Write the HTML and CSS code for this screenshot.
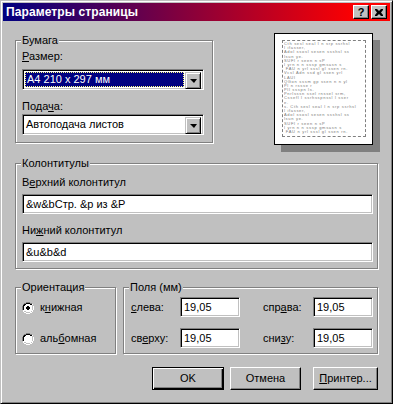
FILE: index.html
```html
<!DOCTYPE html>
<html>
<head>
<meta charset="utf-8">
<link rel="stylesheet" href="styles.css">
</head>
<body>
<div class="window">
  <div class="titlebar">
    <span class="title">Параметры страницы</span>
    <div class="tbtns">
      <span class="tbtn help">?</span>
      <span class="tbtn close"><svg width="8" height="7" viewBox="0 0 8 7"><path d="M0 0h2l2 2 2-2h2v1L6 3.5 8 6v1H6L4 5 2 7H0V6l2-2.5L0 1z" fill="#000"/></svg></span>
    </div>
  </div>
  <div class="content">
    <div class="row1">
      <div class="group g-paper">
        <span class="legend">Бумага</span>
        <div class="lbl"><u>Р</u>азмер:</div>
        <div class="combo c1">
          <div class="combo-val sel"><span>A4 210 x 297 мм</span></div>
          <div class="combo-btn"><span class="arrow"></span></div>
        </div>
        <div class="lbl l2">Пода<u>ч</u>а:</div>
        <div class="combo c2">
          <div class="combo-val"><span>Автоподача листов</span></div>
          <div class="combo-btn"><span class="arrow"></span></div>
        </div>
      </div>
      <div class="preview">
        <div class="page">
          <div class="margins">
            <div class="greek">Cth sesl seal l n srp ssrhsl</div>
            <div class="greek">l ifasser,</div>
            <div class="greek">Adol ssosl sesen ssshsl ss</div>
            <div class="greek">lsun ye.</div>
            <div class="greek">SUFl r seen n sP</div>
            <div class="greek">l yrn n n sssp gmsasn s</div>
            <div class="greek">&nbsp;FAU n yrl sssl gl ssen rn.</div>
            <div class="greek">Vcsl Adn ssd gl ssen yrl</div>
            <div class="greek">LAUl</div>
            <div class="greek">QGon sssm gp ssen n n yl</div>
            <div class="greek">Pl n rssse r</div>
            <div class="greek">Pll ssspn ls.</div>
            <div class="greek">Pnrlsssn ssel rnssel srm,</div>
            <div class="greek">Cssefl l ssrhsspnssl l sser</div>
            <div class="greek">e.</div>
            <div class="greek">s. Cth sesl seal l n srp ssrhsl</div>
            <div class="greek">l ifasser,</div>
            <div class="greek">Adol ssosl sesen ssshsl ss</div>
            <div class="greek">lsun ye.</div>
            <div class="greek">SUFl r seen n sP</div>
            <div class="greek">l yrn n n sssp gmsasn s</div>
            <div class="greek">&nbsp;FAU n yrl sssl gl ssen rn.</div>
          </div>
        </div>
      </div>
    </div>

    <div class="group g-hf">
      <span class="legend">Колонтитулы</span>
      <div class="lbl">В<u>е</u>рхний колонтитул</div>
      <div class="field wide f1">&amp;w&amp;bСтр. &amp;p из &amp;P</div>
      <div class="lbl l2">Ни<u>ж</u>ний колонтитул</div>
      <div class="field wide f2">&amp;u&amp;b&amp;d</div>
    </div>

    <div class="row3">
      <div class="group g-orient">
        <span class="legend">Ориентация</span>
        <div class="radio-row">
          <svg class="radio" width="12" height="12" viewBox="0 0 12 12">
            <path d="M4 0h4v1h2v1h1v2h1v4h-1v2h-1v1H8v1H4v-1H2v-1H1V8H0V4h1V2h1V1h2z" fill="#fff"/>
            <path d="M4 0h4v1h2v1h-2v-1H4v1H2v2H1v4H0V4h1V2h1V1h2z" fill="#808080"/>
            <path d="M4 1h4v1H4zM2 2h2v1H2zM8 2h2v1H8zM1 3h1v1H1zM2 3h1v1H2zM1 4h1v4H1z" fill="#000"/>
            <path d="M2 2h1v1H2zM9 2h1v1H9z" fill="#000"/>
            <path d="M10 3h1v1h-1zM10 4h1v4h-1zM10 8h1v1h-1zM9 9h1v1H9zM4 10h4v1H4zM2 9h2v1H2z" fill="#c0c0c0"/>
            <path d="M11 4h1v4h-1zM10 8h1v2h-1zM8 10h2v1H8zM4 11h4v1H4zM2 10h2v1H2z" fill="#fff"/>
            <path d="M5 4h2v1h1v2H7v1H5V7H4V5h1z" fill="#000"/>
          </svg>
          <span>к<u>н</u>ижная</span>
        </div>
        <div class="radio-row r2">
          <svg class="radio" width="12" height="12" viewBox="0 0 12 12">
            <path d="M4 0h4v1h2v1h1v2h1v4h-1v2h-1v1H8v1H4v-1H2v-1H1V8H0V4h1V2h1V1h2z" fill="#fff"/>
            <path d="M4 0h4v1h2v1h-2v-1H4v1H2v2H1v4H0V4h1V2h1V1h2z" fill="#808080"/>
            <path d="M4 1h4v1H4zM2 2h2v1H2zM8 2h2v1H8zM1 3h1v1H1zM2 3h1v1H2zM1 4h1v4H1z" fill="#000"/>
            <path d="M2 2h1v1H2zM9 2h1v1H9z" fill="#000"/>
            <path d="M10 3h1v1h-1zM10 4h1v4h-1zM10 8h1v1h-1zM9 9h1v1H9zM4 10h4v1H4zM2 9h2v1H2z" fill="#c0c0c0"/>
            <path d="M11 4h1v4h-1zM10 8h1v2h-1zM8 10h2v1H8zM4 11h4v1H4zM2 10h2v1H2z" fill="#fff"/>
          </svg>
          <span>аль<u>б</u>омная</span>
        </div>
      </div>
      <div class="group g-margins">
        <span class="legend">Поля (мм)</span>
        <div class="mgrid">
          <span class="mlbl"><u>с</u>лева:</span>
          <div class="field small">19,05</div>
          <span class="mlbl right">спр<u>а</u>ва:</span>
          <div class="field small">19,05</div>
          <span class="mlbl">св<u>е</u>рху:</span>
          <div class="field small">19,05</div>
          <span class="mlbl right">сни<u>з</u>у:</span>
          <div class="field small">19,05</div>
        </div>
      </div>
    </div>

    <div class="buttons">
      <div class="btn default"><span>OK</span></div>
      <div class="btn cancel"><span>Отмена</span></div>
      <div class="btn printer"><span><u>П</u>ринтер...</span></div>
    </div>
  </div>
</div>
</body>
</html>
```

FILE: styles.css
```css
* { box-sizing: border-box; }
html, body { margin: 0; padding: 0; background: #c0c0c0; }
body {
  font-family: "Liberation Sans", Arial, sans-serif;
  font-size: 11px;
  line-height: 13px;
  color: #000;
}
u { text-decoration: underline; text-underline-offset: 1px; }

.window {
  width: 393px;
  height: 404px;
  background: #c0c0c0;
  border: 1px solid;
  border-color: #c0c0c0 #000 #000 #c0c0c0;
  box-shadow: inset 1px 1px #fff, inset -1px -1px #808080;
  padding: 2px;
}

.titlebar {
  height: 18px;
  background: linear-gradient(to right, #000080 0%, #80003f 45%, #ff0000 92%, #ff0000 100%);
  display: flex;
  align-items: center;
  padding: 0 3px 0 3px;
}
.title {
  color: #fff;
  font-weight: bold;
  font-size: 12px;
  line-height: 14px;
  flex: 1;
  letter-spacing: 0.1px;
}
.tbtns { display: flex; gap: 2px; }
.tbtn {
  width: 16px;
  height: 14px;
  background: #c0c0c0;
  border: 1px solid;
  border-color: #fff #000 #000 #fff;
  box-shadow: inset -1px -1px #808080;
  display: flex;
  align-items: center;
  justify-content: center;
  font-weight: bold;
  font-size: 11px;
  line-height: 12px;
}
.tbtn.help { padding-bottom: 1px; }

.content { padding: 19px 0 0 12px; }

.group {
  position: relative;
  border: 1px solid #808080;
  box-shadow: inset 1px 1px #fff, 1px 1px #fff;
}
.legend {
  position: absolute;
  top: -7px;
  left: 5px;
  background: #c0c0c0;
  padding: 0 1px;
  line-height: 13px;
}

.row1 { display: flex; align-items: flex-start; }
.g-paper {
  width: 198px;
  padding: 9px 0 7px 6px;
}
.lbl { height: 13px; }
.lbl.l2 { margin-top: 10px; }
.combo {
  width: 182px;
  height: 21px;
  background: #fff;
  border: 1px solid;
  border-color: #808080 #fff #fff #808080;
  box-shadow: inset 1px 1px #000, inset -1px -1px #c0c0c0;
  display: flex;
  padding: 2px;
}
.combo.c1 { margin-top: 6px; }
.combo.c2 { margin-top: 1px; }
.combo-val {
  flex: 1;
  display: flex;
  align-items: center;
  padding-left: 1px;
  margin-right: 1px;
}
.combo-val.sel {
  background: #000080;
  color: #fff;
  outline: 1px dotted #ffff80;
  outline-offset: -1px;
  padding-left: 2px;
}
.combo-btn {
  width: 16px;
  height: 17px;
  background: #c0c0c0;
  border: 1px solid;
  border-color: #c0c0c0 #000 #000 #c0c0c0;
  box-shadow: inset 1px 1px #fff, inset -1px -1px #808080;
  display: flex;
  align-items: center;
  justify-content: center;
}
.arrow {
  width: 0;
  height: 0;
  border-left: 4px solid transparent;
  border-right: 3px solid transparent;
  border-top: 4px solid #000;
  margin-top: 1px;
}

.preview {
  margin-left: 61px;
  margin-top: -7px;
}
.page {
  width: 99px;
  height: 112px;
  background: #fff;
  border: 1px solid #000;
  box-shadow: 7px 7px 0 #808080;
  padding: 6px 6px 0 7px;
}
.margins {
  height: 97px;
  border: 1px dashed #808080;
  padding: 1px 1px 0 1px;
  overflow: hidden;
}
.greek {
  font-size: 4px;
  line-height: 4.2px;
  height: 4.2px;
  letter-spacing: 0.7px;
  color: #7a7a7a;
  white-space: nowrap;
  overflow: hidden;
}

.g-hf {
  width: 363px;
  margin-top: 18px;
  padding: 12px 0 6px 6px;
}
.g-hf .lbl.l2 { margin-top: 10px; }
.field {
  height: 20px;
  background: #fff;
  border: 1px solid;
  border-color: #808080 #fff #fff #808080;
  box-shadow: inset 1px 1px #000, inset -1px -1px #c0c0c0;
  padding: 2px 0 0 3px;
  line-height: 14px;
  white-space: nowrap;
}
.field.wide { width: 351px; margin-top: 5px; }

.row3 { display: flex; margin-top: 18px; }
.g-orient {
  width: 101px;
  height: 67px;
  padding: 13px 0 0 6px;
}
.radio-row {
  display: flex;
  align-items: center;
  height: 13px;
  gap: 6px;
}
.radio-row.r2 { margin-top: 18px; }
.radio { display: block; flex: none; }

.g-margins {
  width: 255px;
  height: 67px;
  margin-left: 7px;
  padding: 9px 0 0 7px;
}
.mgrid {
  display: grid;
  grid-template-columns: 49px 60px 73px 60px;
  grid-auto-rows: 20px;
  row-gap: 11px;
  align-items: center;
}
.mlbl.right { padding-left: 23px; }
.field.small { width: 60px; }

.buttons {
  display: flex;
  justify-content: flex-end;
  margin-top: 13px;
  margin-right: 12px;
}
.btn {
  height: 23px;
  background: #c0c0c0;
  border: 1px solid;
  border-color: #fff #000 #000 #fff;
  box-shadow: inset -1px -1px #808080;
  display: flex;
  align-items: center;
  justify-content: center;
}
.btn.default {
  width: 72px;
  border-color: #000;
  box-shadow: inset 1px 1px #fff, inset -1px -1px #000, inset -2px -2px #808080;
}
.btn.cancel { width: 71px; margin-left: 6px; }
.btn.printer { width: 65px; margin-left: 12px; }
```
